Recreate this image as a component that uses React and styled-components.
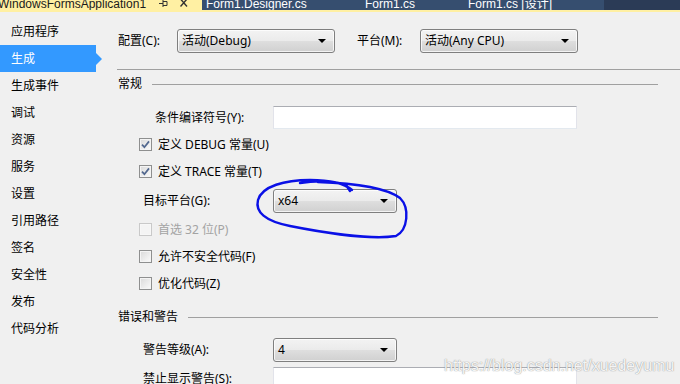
import React from 'react';
import styled, { createGlobalStyle, css } from 'styled-components';

const Global = createGlobalStyle`
  html, body { margin: 0; padding: 0; }
  body {
    width: 680px; height: 384px; overflow: hidden; background: #f0f0f0;
    font-family: "Noto Sans", "Noto Sans CJK SC", sans-serif; font-size: 12px; color: #000;
  }
`;

const Window = styled.div`
  position: relative; width: 680px; height: 384px; overflow: hidden;
  background: #f0f0f0; display: flex; flex-direction: column;
`;

const TabStrip = styled.div`
  display: flex; height: 10px; flex: none; background: #2b3b56;
`;

const Tab = styled.div`
  height: 10px; overflow: hidden; flex: none; box-sizing: border-box;
  width: ${p => p.w}px; padding-left: ${p => p.pl}px;
  background: ${p => (p.active ? '#fff0a3' : '#364e6f')};
  color: ${p => (p.active ? '#1a1a1a' : '#ffffff')};
  display: flex; align-items: flex-start;
  font-family: "Liberation Sans", Arial, "Noto Sans CJK SC", sans-serif; font-size: 12px;
`;

const TabText = styled.span`
  display: block; line-height: 14px; margin-top: -3px; white-space: nowrap;
  margin-left: ${p => p.ml || 0}px;
`;

const TabIcon = styled.svg`
  flex: none; margin-left: ${p => p.ml}px;
`;

const YellowRule = styled.div`
  height: 2px; flex: none; background: #fff0a3;
`;

const Body = styled.div`
  flex: 1; display: flex; min-height: 0;
`;

const Sidebar = styled.nav`
  width: 100px; flex: none; padding-top: 6px; display: flex; flex-direction: column;
`;

const NavItem = styled.div`
  position: relative; height: 27px; width: 96px; box-sizing: border-box;
  padding-left: 11px; display: flex; align-items: center; line-height: 16px;
  ${p => p.selected && css`
    background: #3399ff; color: #fff;
    &::after {
      content: ''; position: absolute; right: -6px; top: 8px;
      border-left: 6px solid #3399ff; border-top: 6px solid transparent; border-bottom: 6px solid transparent;
    }
  `}
`;

const Main = styled.main`
  flex: 1; padding-left: 17px; display: flex; flex-direction: column;
`;

const HeaderBar = styled.div`
  display: flex; align-items: center; padding-top: 17px; height: 24px; margin-bottom: 16px;
`;

const HeaderLabel = styled.div`
  width: ${p => p.w}px; flex: none; box-sizing: border-box;
  padding-left: ${p => p.pl || 0}px; margin-left: ${p => p.ml || 0}px; line-height: 16px;
`;

const Divider = styled.div`
  height: 1px; background: #a0a0a0; flex: none;
`;

const SectionHeader = styled.div`
  display: flex; align-items: center; height: 16px; flex: none;
  margin-top: ${p => p.mt}px; padding-left: 1px; margin-right: 22px; line-height: 16px;
`;

const SectionLine = styled.div`
  flex: 1; height: 1px; background: #a0a0a0; margin-left: 10px;
`;

const Row = styled.div`
  display: flex; align-items: center; flex: none;
  height: ${p => p.h}px; margin-top: ${p => p.mt || 0}px;
`;

const LabelCell = styled.div`
  width: 156px; flex: none; box-sizing: border-box; padding-left: ${p => p.pl}px; line-height: 16px;
`;

const TextBox = styled.div`
  width: 304px; height: 23px; box-sizing: border-box; background: #fff;
  border: 1px solid #e2e3ea; border-top-color: #abadb3; border-bottom-color: #e3e9ef;
`;

const Select = styled.div`
  position: relative; width: ${p => p.w}px; height: 24px; box-sizing: border-box; flex: none;
  border: 1px solid #7f7f7f; border-radius: 3px;
  background: linear-gradient(#f3f3f3 0%, #ebebeb 48%, #dedede 52%, #d0d0d0 100%);
  box-shadow: inset 0 0 0 1px rgba(255,255,255,0.75);
  display: flex; align-items: center; padding-left: 4px; line-height: 16px;
  &::after {
    content: ''; position: absolute; right: 8px; top: 9px;
    border-top: 4px solid #000; border-left: 4px solid transparent; border-right: 4px solid transparent;
  }
`;

const CheckRow = styled.label`
  display: flex; align-items: center; padding-left: 22px; gap: 6px; line-height: 16px;
  color: ${p => (p.disabled ? '#a3a3a3' : '#000')};
`;

const Box = styled.span`
  width: 13px; height: 13px; box-sizing: border-box; flex: none; display: flex;
  align-items: center; justify-content: center;
  border: 1px solid ${p => (p.disabled ? '#c9c9c9' : '#8e8f8f')};
  background: ${p => (p.disabled
    ? '#f4f4f4'
    : 'linear-gradient(135deg, #d9d9d9 0%, #ececec 55%, #fbfbfb 100%)')};
  box-shadow: inset 0 0 0 1px ${p => (p.disabled ? '#f7f7f7' : '#f4f4f4')};
`;

const Watermark = styled.div`
  position: absolute; left: 444px; top: 357px;
  font-family: "Liberation Sans", Arial, sans-serif; font-size: 16px; line-height: 18px;
  color: rgba(255,255,255,0.92);
  text-shadow: 0 0 1px rgba(120,120,120,0.7), 0 0 1px rgba(120,120,120,0.5);
  white-space: nowrap; pointer-events: none;
`;

const Annotation = styled.svg`
  position: absolute; left: 0; top: 0; pointer-events: none;
`;

const Check = ({ checked, disabled }) => (
  <Box disabled={disabled}>
    {checked && (
      <svg width="9" height="9" viewBox="0 0 9 9">
        <path d="M1 4.6 L3.4 7.2 L8 1.4" fill="none" stroke="#52688f" strokeWidth="1.7" />
      </svg>
    )}
  </Box>
);

const navItems = ['应用程序', '生成', '生成事件', '调试', '资源', '服务', '设置', '引用路径', '签名', '安全性', '发布', '代码分析'];

export default function App() {
  return (
    <Window>
      <Global />
      <TabStrip>
        <Tab active w={202} pl={0}>
          <TabText ml={-2}>WindowsFormsApplication1</TabText>
          <TabIcon ml={13} width="9" height="8" viewBox="0 0 9 8">
            <path d="M0 3.5 H4 M4 0 V7 M4 1.5 H8 M4 5.5 H8 M8 1.5 V5.5" stroke="#333" strokeWidth="1" fill="none" />
          </TabIcon>
          <TabIcon ml={12} width="8" height="8" viewBox="0 0 8 8">
            <path d="M0.5 -1 L7 6.5 M7 -1 L0.5 6.5" stroke="#333" strokeWidth="1.4" fill="none" />
          </TabIcon>
        </Tab>
        <Tab w={148} pl={4}><TabText>Form1.Designer.cs</TabText></Tab>
        <Tab w={105} pl={15}><TabText>Form1.cs</TabText></Tab>
        <Tab w={149} pl={13}><TabText>Form1.cs [设计]</TabText></Tab>
      </TabStrip>
      <YellowRule />
      <Body>
        <Sidebar>
          {navItems.map(n => (
            <NavItem key={n} selected={n === '生成'}>{n}</NavItem>
          ))}
        </Sidebar>
        <Main>
          <HeaderBar>
            <HeaderLabel w={60} pl={1}>配置(C):</HeaderLabel>
            <Select w={158}>活动(Debug)</Select>
            <HeaderLabel w={63} ml={22}>平台(M):</HeaderLabel>
            <Select w={158}>活动(Any CPU)</Select>
          </HeaderBar>
          <Divider />
          <SectionHeader mt={6}>常规<SectionLine /></SectionHeader>
          <Row h={27} mt={12}>
            <LabelCell pl={38}>条件编译符号(Y):</LabelCell>
            <TextBox />
          </Row>
          <Row h={27}><CheckRow><Check checked />定义 DEBUG 常量(U)</CheckRow></Row>
          <Row h={27}><CheckRow><Check checked />定义 TRACE 常量(T)</CheckRow></Row>
          <Row h={31}>
            <LabelCell pl={26}>目标平台(G):</LabelCell>
            <Select w={124}>x64</Select>
          </Row>
          <Row h={27}><CheckRow disabled><Check disabled />首选 32 位(P)</CheckRow></Row>
          <Row h={27}><CheckRow><Check />允许不安全代码(F)</CheckRow></Row>
          <Row h={27}><CheckRow><Check />优化代码(Z)</CheckRow></Row>
          <SectionHeader mt={12}>错误和警告<SectionLine /></SectionHeader>
          <Row h={30} mt={10}>
            <LabelCell pl={26}>警告等级(A):</LabelCell>
            <Select w={124}>4</Select>
          </Row>
          <Row h={27}>
            <LabelCell pl={26}>禁止显示警告(S):</LabelCell>
            <TextBox />
          </Row>
        </Main>
      </Body>
      <Annotation width="680" height="384" viewBox="0 0 680 384">
        <path
          d="M300 183 C318 180 336 181 346 185 L350 191 M318 182 C350 183 385 187 400 198 C410 208 408 230 396 236 C370 240 320 232 290 226 C265 221 255 212 258 200 C262 186 285 180 310 180 C330 180 345 184 352 190"
          fill="none" stroke="#0a10e6" strokeWidth="2.4" strokeLinecap="round" strokeLinejoin="round"
        />
      </Annotation>
      <Watermark>https://blog.csdn.net/xuedeyumu</Watermark>
    </Window>
  );
}
